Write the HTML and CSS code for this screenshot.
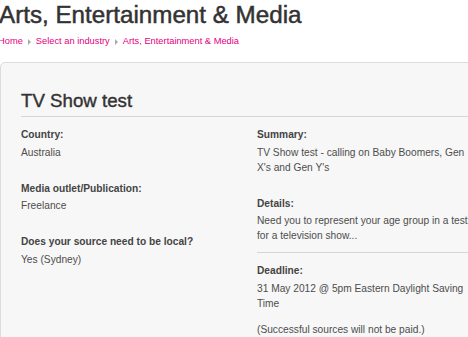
FILE: index.html
```html
<!DOCTYPE html>
<html lang="en">

<head>
    <meta charset="UTF-8">
    <meta name="viewport" content="width=device-width, initial-scale=1.0">
    <title>TV Show test</title>
    <link rel="stylesheet" href="styles.css">
</head>

<body>
    <h1 class="industry">Arts, Entertainment &amp; Media</h1>
    <!-- Breadcrumbs -->
    <div class="crumbs">
        <a href="#">Home</a><span class="sep"></span><a href="#">Select an industry</a><span class="sep"></span><a href="#">Arts, Entertainment &amp; Media</a>
    </div>

    <!-- Request card -->
    <div class="card">
        <h2>TV Show test</h2>
        <div class="cols">
            <div class="col">
                <div class="field">
                    <div class="label">Country:</div>
                    <p class="value">Australia</p>
                </div>
                <div class="field">
                    <div class="label">Media outlet/Publication:</div>
                    <p class="value">Freelance</p>
                </div>
                <div class="field">
                    <div class="label">Does your source need to be local?</div>
                    <p class="value">Yes (Sydney)</p>
                </div>
            </div>
            <div class="col">
                <div class="field">
                    <div class="label">Summary:</div>
                    <p class="value">TV Show test - calling on Baby Boomers, Gen X's and Gen Y's</p>
                </div>
                <div class="field divided">
                    <div class="label">Details:</div>
                    <p class="value">Need you to represent your age group in a test for a television show...</p>
                </div>
                <div class="field">
                    <div class="label">Deadline:</div>
                    <p class="value">31 May 2012 @ 5pm Eastern Daylight Saving Time</p>
                    <p class="value">(Successful sources will not be paid.)</p>
                </div>
            </div>
        </div>
    </div>
</body>

</html>
```

FILE: styles.css
```css
html,
body {
    overflow: hidden;
}

body {
    margin: 0;
    background-color: #fff;
    font-family: "Liberation Sans", Helvetica, Arial, sans-serif;
    color: #4d4d4d;
}

.industry {
    margin: 1px 0 0 -1px;
    font-size: 24.2px;
    line-height: 28px;
    font-weight: normal;
    color: #333;
    -webkit-text-stroke: 0.5px #333;
    white-space: nowrap;
}

.crumbs {
    display: flex;
    align-items: center;
    margin: 6px 0 0 -2px;
    font-size: 9.3px;
    line-height: 13px;
    white-space: nowrap;
}

.crumbs a {
    color: #e6007e;
    text-decoration: none;
}

.sep {
    width: 0;
    height: 0;
    margin: 1px 5px 0 5px;
    border-left: 3px solid #aaa;
    border-top: 3px solid transparent;
    border-bottom: 3px solid transparent;
}

.card {
    width: 520px;
    margin-top: 14px;
    padding: 27px 0 20px 20px;
    background-color: #f7f7f7;
    border: 1px solid #dcdcdc;
    border-radius: 5px;
}

.card h2 {
    margin: 0;
    padding-bottom: 4px;
    border-bottom: 1px solid #d6d6d6;
    font-size: 18.7px;
    line-height: 22px;
    font-weight: normal;
    color: #333;
    -webkit-text-stroke: 0.4px #333;
}

.cols {
    display: grid;
    grid-template-columns: 236px 215px;
    margin-top: 10px;
}

.field {
    margin-bottom: 21px;
}

.field.divided {
    padding-bottom: 9px;
    border-bottom: 1px solid #d6d6d6;
    margin-bottom: 10px;
}

.label {
    margin-bottom: 2.5px;
    font-size: 10.2px;
    line-height: 15px;
    font-weight: bold;
    color: #444;
}

.value {
    margin: 0;
    font-size: 10.2px;
    line-height: 15px;
    color: #4d4d4d;
}

.value + .value {
    margin-top: 11px;
}
```
